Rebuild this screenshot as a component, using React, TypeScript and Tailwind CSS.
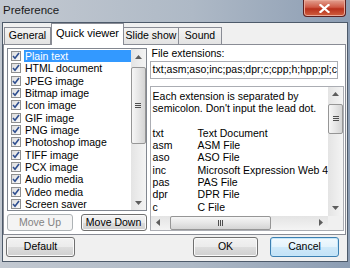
const ITEMS = [
  'Plain text',
  'HTML document',
  'JPEG image',
  'Bitmap image',
  'Icon image',
  'GIF image',
  'PNG image',
  'Photoshop image',
  'TIFF image',
  'PCX image',
  'Audio media',
  'Video media',
  'Screen saver',
];

const EXTS = [
  ['txt', 'Text Document'],
  ['asm', 'ASM File'],
  ['aso', 'ASO File'],
  ['inc', 'Microsoft Expression Web 4'],
  ['pas', 'PAS File'],
  ['dpr', 'DPR File'],
  ['c', 'C File'],
];

function Arrow({ dir }: { dir: 'up' | 'down' | 'left' | 'right' }) {
  const pts = {
    up: '0,4 3.5,0 7,4',
    down: '0,0 3.5,4 7,0',
    left: '4,0 0,3.5 4,7',
    right: '0,0 4,3.5 0,7',
  }[dir];
  const vertical = dir === 'up' || dir === 'down';
  return (
    <svg width={vertical ? 7 : 4} height={vertical ? 4 : 7} viewBox={vertical ? '0 0 7 4' : '0 0 4 7'}>
      <polygon points={pts} fill="#5d5d5d" />
    </svg>
  );
}

function VScroll({ thumbTop, thumbHeight, className }: { thumbTop: number; thumbHeight: number; className: string }) {
  return (
    <div className={`relative flex w-[15px] flex-col items-center bg-[linear-gradient(90deg,#e4e4e4,#f4f4f4)] ${className}`}>
      <div className="flex h-[15px] w-full items-center justify-center">
        <Arrow dir="up" />
      </div>
      <div className="flex-1" />
      <div className="flex h-[15px] w-full items-center justify-center">
        <Arrow dir="down" />
      </div>
      <div
        className="absolute left-0 flex w-[15px] flex-col items-center justify-center gap-[1px] rounded-[2px] border border-[#969696] bg-[linear-gradient(90deg,#f6f6f6,#e6e6e6_50%,#d4d4d4)]"
        style={{ top: thumbTop, height: thumbHeight }}
      >
        <span className="h-px w-[6px] bg-[#4e4e4e]" />
        <span className="h-px w-[6px] bg-[#4e4e4e]" />
        <span className="h-px w-[6px] bg-[#4e4e4e]" />
      </div>
    </div>
  );
}

function Check() {
  return (
    <span className="flex h-[10px] w-[10px] items-center justify-center border border-[#8e8f8f] bg-[linear-gradient(135deg,#dcdcdc,#fbfbfb)]">
      <svg width="8" height="8" viewBox="0 0 8 8">
        <path d="M1 4 L3 6.2 L7 1" fill="none" stroke="#2e4e8f" strokeWidth="1.6" />
      </svg>
    </span>
  );
}

function Btn({ children, className, disabled, focus }: { children: string; className: string; disabled?: boolean; focus?: boolean }) {
  const look = disabled
    ? 'border-[#adb2b5] bg-[#f4f4f4] text-[#838383]'
    : focus
      ? 'border-[#3c7fb1] bg-[linear-gradient(180deg,#f1f9fe,#e4f3fc_50%,#cfe9f9_51%,#c2e2f7)] text-black shadow-[inset_0_0_0_1px_#c6e7fa]'
      : 'border-[#707070] bg-[linear-gradient(180deg,#f2f2f2,#ebebeb_50%,#dddddd_51%,#cfcfcf)] text-black shadow-[inset_0_0_0_1px_#fafafa]';
  return (
    <div className={`flex items-center justify-center rounded-[3px] border text-[10.5px] ${look} ${className}`}>
      {children}
    </div>
  );
}

export default function App() {
  return (
    <div className="flex h-[268px] w-[350px] flex-col overflow-hidden bg-[linear-gradient(90deg,#c3c9d1,#aeb9c6_55%,#8c9db3)] font-['Liberation_Sans',Arial,sans-serif] text-black">
      {/* title bar */}
      <div className="flex h-[22px] items-start">
        <span className="pl-[3px] pt-[3px] text-[11.5px] leading-[14px] text-[#1a1a1a]">Preference</span>
        <div className="ml-auto mr-[4px] flex h-[17px] w-[43px] items-center justify-center rounded-b-[4px] border border-t-0 border-[#5c2020] bg-[linear-gradient(180deg,#e2a090,#cf5a46_45%,#b8301c_55%,#d0603f)] shadow-[inset_0_0_0_1px_#e9a797]">
          <svg width="11" height="9" viewBox="0 0 11 9">
            <path d="M1.5 1 L9.5 8 M9.5 1 L1.5 8" stroke="#ffffff" strokeWidth="2.2" strokeLinecap="square" />
          </svg>
        </div>
      </div>

      {/* client */}
      <div className="mx-[2px] flex h-[240px] flex-col border border-[#4d5a6a] bg-[#f0f0f0]">
        {/* tabs */}
        <div className="relative z-10 flex h-[21px] items-end pl-[1px] text-[10.5px]">
          <div className="flex h-[17px] w-[47px] items-center justify-center border border-b-0 border-[#898c95] bg-[linear-gradient(180deg,#f3f3f3,#e3e3e3)]">
            General
          </div>
          <div className="-mb-px flex h-[22px] w-[73px] items-center justify-center border border-b-0 border-[#898c95] bg-white pb-[2px] text-[11px]">
            Quick viewer
          </div>
          <div className="flex h-[17px] w-[55px] items-center justify-center border border-b-0 border-l-0 border-[#898c95] bg-[linear-gradient(180deg,#f3f3f3,#e3e3e3)]">
            Slide show
          </div>
          <div className="flex h-[17px] w-[43px] items-center justify-center border border-b-0 border-l-0 border-[#898c95] bg-[linear-gradient(180deg,#f3f3f3,#e3e3e3)]">
            Sound
          </div>
        </div>

        {/* panel */}
        <div className="mr-[1px] flex h-[191px] gap-[3px] border border-[#898c95] bg-white py-[3px] pl-[3px] pr-[1px]">
          {/* left column */}
          <div className="flex w-[145px] flex-col gap-[3px]">
            <div className="flex h-[164px] border border-[#828790] bg-white">
              <div className="flex flex-1 flex-col overflow-hidden pl-[3px] pt-[1px] text-[10.5px]">
                {ITEMS.map((it, i) => (
                  <div key={it} className="flex h-[12.33px] shrink-0 items-center gap-[3px]">
                    <Check />
                    <span
                      className={`flex h-full flex-1 items-center pl-[1px] leading-none ${i === 0 ? 'bg-[#3399ff] text-white' : ''}`}
                    >
                      {it}
                    </span>
                  </div>
                ))}
              </div>
              <VScroll thumbTop={18} thumbHeight={77} className="h-full" />
            </div>
            <div className="flex justify-between">
              <Btn disabled className="h-[17px] w-[66px]">Move Up</Btn>
              <Btn className="h-[17px] w-[66px]">Move Down</Btn>
            </div>
          </div>

          {/* right column */}
          <div className="flex flex-1 flex-col">
            <span className="h-[13px] pl-[2px] text-[10.5px] leading-[11px]">File extensions:</span>
            <div className="mr-[6px] flex h-[18px] items-center overflow-hidden whitespace-nowrap border border-[#abadb3] bg-white pl-[2px] text-[10.5px]">
              txt;asm;aso;inc;pas;dpr;c;cpp;h;hpp;pl;c
            </div>
            <div className="mt-[7px] grid h-[147px] grid-cols-[1fr_15px] grid-rows-[1fr_14px] border border-[#abadb3] bg-white">
              <div className="overflow-hidden whitespace-nowrap pl-[2px] pt-[3px] text-[10.5px] leading-[12.33px]">
                <div>Each extension is separated by</div>
                <div>semicolon. Don't input the lead dot.</div>
                <div>&nbsp;</div>
                {EXTS.map(([e, d]) => (
                  <div key={e} className="flex">
                    <span className="w-[45px] shrink-0">{e}</span>
                    <span>{d}</span>
                  </div>
                ))}
              </div>
              <VScroll thumbTop={17} thumbHeight={30} className="h-full" />
              <div className="relative flex items-center justify-between bg-[linear-gradient(180deg,#e4e4e4,#f4f4f4)] px-[5px]">
                <Arrow dir="left" />
                <Arrow dir="right" />
                <div className="absolute left-[19px] top-0 flex h-[14px] w-[101px] items-center justify-center gap-[1px] rounded-[2px] border border-[#969696] bg-[linear-gradient(180deg,#f6f6f6,#e6e6e6_50%,#d4d4d4)]">
                  <span className="h-[6px] w-px bg-[#4e4e4e]" />
                  <span className="h-[6px] w-px bg-[#4e4e4e]" />
                  <span className="h-[6px] w-px bg-[#4e4e4e]" />
                </div>
              </div>
              <div className="bg-[#f0f0f0]" />
            </div>
          </div>
        </div>

        {/* bottom buttons */}
        <div className="flex items-start pt-[2px]">
          <Btn className="ml-[3px] h-[20px] w-[69px]">Default</Btn>
          <Btn className="ml-auto h-[20px] w-[65px]">OK</Btn>
          <Btn focus className="ml-[12px] mr-[8px] h-[20px] w-[69px]">Cancel</Btn>
        </div>
      </div>
    </div>
  );
}
